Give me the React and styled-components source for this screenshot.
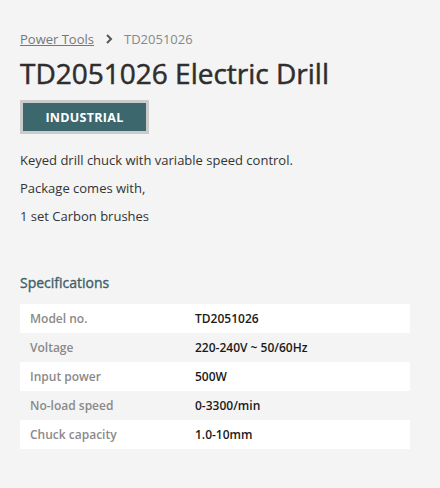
import React from 'react';
import styled, { createGlobalStyle } from 'styled-components';

const GlobalStyle = createGlobalStyle`
  html, body {
    margin: 0;
    padding: 0;
    background: #f4f4f4;
  }
  body {
    font-family: "Open Sans", "Noto Sans", sans-serif;
  }
`;

const Page = styled.div`
  width: 440px;
  min-height: 488px;
  box-sizing: border-box;
  padding: 30px 30px 0 20px;
`;

const Breadcrumb = styled.nav`
  display: flex;
  align-items: center;
  gap: 10px;
  font-size: 13px;
  line-height: 18px;
  color: #888;

  a {
    color: #777;
    text-decoration: underline;
  }
`;

const Chevron = styled.svg`
  width: 8px;
  height: 10px;
  margin: 0 1px;
`;

/* medium weight: thicken the regular cut a little */
const Title = styled.h1`
  margin: 6px 0 8px;
  font-size: 28px;
  line-height: 38px;
  font-weight: 400;
  -webkit-text-stroke: 0.5px #2e2e2e;
  color: #2e2e2e;
`;

const Badge = styled.div`
  display: inline-flex;
  align-items: center;
  justify-content: center;
  width: 123px;
  height: 28px;
  background: #3b676d;
  border: 3px solid #cbcbcb;
  color: #fff;
  font-size: 12.5px;
  font-weight: 700;
  letter-spacing: 0.3px;
`;

const Text = styled.p`
  margin: 0;
  font-size: 13px;
  line-height: 28px;
  color: #333;
  &:first-of-type {
    margin-top: 12px;
  }
`;

const SectionTitle = styled.h2`
  margin: 42px 0 10px;
  font-size: 14px;
  line-height: 22px;
  font-weight: 400;
  -webkit-text-stroke: 0.35px #3d6068;
  color: #3d6068;
`;

const Table = styled.div`
  width: 390px;
  display: flex;
  flex-direction: column;
`;

const Row = styled.div`
  display: grid;
  grid-template-columns: 165px 1fr;
  height: 29px;
  align-items: center;
  padding-left: 10px;
  background: ${p => (p.$striped ? '#ffffff' : 'transparent')};
  font-size: 12px;
  font-weight: 600;
`;

const Label = styled.span`
  color: #8a8a8a;
`;

const Value = styled.span`
  color: #1a1a1a;
`;

const specs = [
  ['Model no.', 'TD2051026'],
  ['Voltage', '220-240V ~ 50/60Hz'],
  ['Input power', '500W'],
  ['No-load speed', '0-3300/min'],
  ['Chuck capacity', '1.0-10mm'],
];

export default function App() {
  return (
    <>
      <GlobalStyle />
      <Page>
        <Breadcrumb>
          <a href="#">Power Tools</a>
          <Chevron viewBox="0 0 8 10">
            <path d="M2 1 L6 5 L2 9" fill="none" stroke="#555" strokeWidth="2" />
          </Chevron>
          <span>TD2051026</span>
        </Breadcrumb>
        <Title>TD2051026 Electric Drill</Title>
        <Badge>INDUSTRIAL</Badge>
        <Text>Keyed drill chuck with variable speed control.</Text>
        <Text>Package comes with,</Text>
        <Text>1 set Carbon brushes</Text>
        <SectionTitle>Specifications</SectionTitle>
        <Table>
          {specs.map(([k, v], i) => (
            <Row key={k} $striped={i % 2 === 0}>
              <Label>{k}</Label>
              <Value>{v}</Value>
            </Row>
          ))}
        </Table>
      </Page>
    </>
  );
}
